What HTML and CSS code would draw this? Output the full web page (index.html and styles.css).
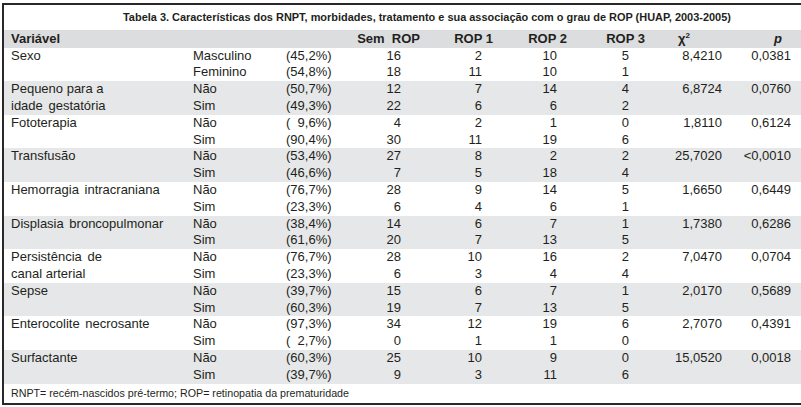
FILE: index.html
```html
<!DOCTYPE html>
<html lang="pt">
<head>
<meta charset="utf-8">
<title>Tabela 3</title>
<link rel="stylesheet" href="styles.css">
</head>
<body>
<div class="frame">
  <div class="title">Tabela 3. Características dos RNPT, morbidades, tratamento e sua associação com o grau de ROP (HUAP, 2003-2005)</div>
  <table class="data">
    <colgroup>
      <col class="c1"><col class="c2"><col class="c3"><col class="c4"><col class="c5"><col class="c6"><col class="c7"><col class="c8"><col class="c9">
    </colgroup>
    <thead>
      <tr><th>Variável</th><th></th><th></th><th>Sem&nbsp; ROP</th><th>ROP 1</th><th>ROP 2</th><th>ROP 3</th><th>χ<sup>2</sup></th><th><i>p</i></th></tr>
    </thead>
    <tbody>
      <tr><td>Sexo</td><td>Masculino</td><td>(45,2%)</td><td>16</td><td>2</td><td>10</td><td>5</td><td>8,4210</td><td>0,0381</td></tr>
      <tr><td></td><td>Feminino</td><td>(54,8%)</td><td>18</td><td>11</td><td>10</td><td>1</td><td></td><td></td></tr>
      <tr class="alt"><td>Pequeno para a</td><td>Não</td><td>(50,7%)</td><td>12</td><td>7</td><td>14</td><td>4</td><td>6,8724</td><td>0,0760</td></tr>
      <tr class="alt"><td class="wide">idade gestatória</td><td>Sim</td><td>(49,3%)</td><td>22</td><td>6</td><td>6</td><td>2</td><td></td><td></td></tr>
      <tr><td>Fototerapia</td><td>Não</td><td>(  9,6%)</td><td>4</td><td>2</td><td>1</td><td>0</td><td>1,8110</td><td>0,6124</td></tr>
      <tr><td></td><td>Sim</td><td>(90,4%)</td><td>30</td><td>11</td><td>19</td><td>6</td><td></td><td></td></tr>
      <tr class="alt"><td>Transfusão</td><td>Não</td><td>(53,4%)</td><td>27</td><td>8</td><td>2</td><td>2</td><td>25,7020</td><td>&lt;0,0010</td></tr>
      <tr class="alt"><td></td><td>Sim</td><td>(46,6%)</td><td>7</td><td>5</td><td>18</td><td>4</td><td></td><td></td></tr>
      <tr><td class="wide">Hemorragia intracraniana</td><td>Não</td><td>(76,7%)</td><td>28</td><td>9</td><td>14</td><td>5</td><td>1,6650</td><td>0,6449</td></tr>
      <tr><td></td><td>Sim</td><td>(23,3%)</td><td>6</td><td>4</td><td>6</td><td>1</td><td></td><td></td></tr>
      <tr class="alt"><td class="wide">Displasia broncopulmonar</td><td>Não</td><td>(38,4%)</td><td>14</td><td>6</td><td>7</td><td>1</td><td>1,7380</td><td>0,6286</td></tr>
      <tr class="alt"><td></td><td>Sim</td><td>(61,6%)</td><td>20</td><td>7</td><td>13</td><td>5</td><td></td><td></td></tr>
      <tr><td class="wide">Persistência de</td><td>Não</td><td>(76,7%)</td><td>28</td><td>10</td><td>16</td><td>2</td><td>7,0470</td><td>0,0704</td></tr>
      <tr><td>canal arterial</td><td>Sim</td><td>(23,3%)</td><td>6</td><td>3</td><td>4</td><td>4</td><td></td><td></td></tr>
      <tr class="alt"><td>Sepse</td><td>Não</td><td>(39,7%)</td><td>15</td><td>6</td><td>7</td><td>1</td><td>2,0170</td><td>0,5689</td></tr>
      <tr class="alt"><td></td><td>Sim</td><td>(60,3%)</td><td>19</td><td>7</td><td>13</td><td>5</td><td></td><td></td></tr>
      <tr><td class="wide">Enterocolite necrosante</td><td>Não</td><td>(97,3%)</td><td>34</td><td>12</td><td>19</td><td>6</td><td>2,7070</td><td>0,4391</td></tr>
      <tr><td></td><td>Sim</td><td>(  2,7%)</td><td>0</td><td>1</td><td>1</td><td>0</td><td></td><td></td></tr>
      <tr class="alt"><td>Surfactante</td><td>Não</td><td>(60,3%)</td><td>25</td><td>10</td><td>9</td><td>0</td><td>15,0520</td><td>0,0018</td></tr>
      <tr class="alt"><td></td><td>Sim</td><td>(39,7%)</td><td>9</td><td>3</td><td>11</td><td>6</td><td></td><td></td></tr>
    </tbody>
  </table>
  <div class="note">RNPT= recém-nascidos pré-termo; ROP= retinopatia da prematuridade</div>
</div>
</body>
</html>
```

FILE: styles.css
```css
html, body {
  margin: 0;
  padding: 0;
  background: #ffffff;
  overflow: hidden;
}

body {
  font-family: "Liberation Sans", Arial, sans-serif;
  color: #231f20;
}

.frame {
  margin: 3px 0 0 2px;
  width: 799px;
  border-top: 2px solid #2a2728;
  border-left: 2px solid #2a2728;
  border-bottom: 2px solid #2a2728;
}

.title {
  height: 25px;
  line-height: 25px;
  padding-left: 119px;
  font-size: 10.95px;
  font-weight: bold;
  white-space: nowrap;
}

.data {
  width: 797px;
  border-collapse: collapse;
  table-layout: fixed;
  font-size: 13px;
}

.c1 { width: 181px; }
.c2 { width: 95px; }
.c3 { width: 65px; }
.c4 { width: 85px; }
.c5 { width: 80px; }
.c6 { width: 75px; }
.c7 { width: 75px; }
.c8 { width: 80px; }
.c9 { width: 61px; }

.data th,
.data td {
  padding: 0;
  white-space: pre;
  overflow: visible;
}

.data thead tr {
  background: #dcddde;
}

.data th {
  height: 17.6px;
  line-height: 17.6px;
  font-weight: bold;
  text-align: right;
}

.data th sup {
  font-size: 8px;
  line-height: 0;
  vertical-align: 5px;
}

.data td {
  height: 16.8px;
  line-height: 16.8px;
  text-align: right;
}

.data tr.alt {
  background: #e6e7e8;
}

.data th:nth-child(1),
.data td:nth-child(1) { text-align: left; padding-left: 7px; }
.data th:nth-child(2),
.data td:nth-child(2) { text-align: left; padding-left: 8px; }
.data th:nth-child(3),
.data td:nth-child(3) { text-align: left; padding-left: 6px; }

.data td:nth-child(4) { padding-right: 29px; }
.data td:nth-child(5) { padding-right: 28px; }
.data td:nth-child(6) { padding-right: 28px; }
.data td:nth-child(7) { padding-right: 31px; }
.data td:nth-child(8) { padding-right: 18px; }
.data td:nth-child(9) { padding-right: 10px; }

.data th:nth-child(4) { padding-right: 10px; }
.data th:nth-child(5) { padding-right: 17px; }
.data th:nth-child(6) { padding-right: 18px; }
.data th:nth-child(7) { padding-right: 15px; }
.data th:nth-child(8) { padding-right: 50px; }
.data th:nth-child(9) { padding-right: 19px; }

.data td.wide {
  word-spacing: 2px;
}

.note {
  height: 19px;
  line-height: 19px;
  padding-left: 7px;
  font-size: 10.7px;
}
```
